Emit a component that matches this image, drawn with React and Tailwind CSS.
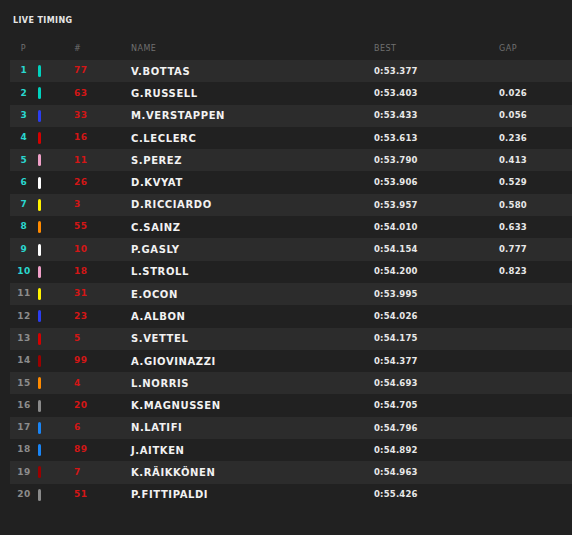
import React from 'react';

const rows = [
  [1, '#00d2be', 77, 'V.BOTTAS', '0:53.377', ''],
  [2, '#00d2be', 63, 'G.RUSSELL', '0:53.403', '0.026'],
  [3, '#2b3df0', 33, 'M.VERSTAPPEN', '0:53.433', '0.056'],
  [4, '#d40000', 16, 'C.LECLERC', '0:53.613', '0.236'],
  [5, '#f0a0c8', 11, 'S.PEREZ', '0:53.790', '0.413'],
  [6, '#ffffff', 26, 'D.KVYAT', '0:53.906', '0.529'],
  [7, '#fff200', 3, 'D.RICCIARDO', '0:53.957', '0.580'],
  [8, '#ff8a00', 55, 'C.SAINZ', '0:54.010', '0.633'],
  [9, '#ffffff', 10, 'P.GASLY', '0:54.154', '0.777'],
  [10, '#f0a0c8', 18, 'L.STROLL', '0:54.200', '0.823'],
  [11, '#fff200', 31, 'E.OCON', '0:53.995', ''],
  [12, '#2b3df0', 23, 'A.ALBON', '0:54.026', ''],
  [13, '#d40000', 5, 'S.VETTEL', '0:54.175', ''],
  [14, '#9b0000', 99, 'A.GIOVINAZZI', '0:54.377', ''],
  [15, '#ff8a00', 4, 'L.NORRIS', '0:54.693', ''],
  [16, '#8a8a8a', 20, 'K.MAGNUSSEN', '0:54.705', ''],
  [17, '#1a85f5', 6, 'N.LATIFI', '0:54.796', ''],
  [18, '#1a85f5', 89, 'J.AITKEN', '0:54.892', ''],
  [19, '#9b0000', 7, 'K.RÄIKKÖNEN', '0:54.963', ''],
  [20, '#8a8a8a', 51, 'P.FITTIPALDI', '0:55.426', ''],
];

export default function App() {
  return (
    <div className="w-[572px] h-[535px] bg-[#212121] overflow-hidden font-['DejaVu_Sans',sans-serif]">
      <div className="pt-[15px] pl-[13px] h-[40px] text-[8px] font-bold tracking-[0.4px] text-[#e6e6e6]">LIVE TIMING</div>
      <div className="flex items-center h-[17px] pl-[10px] text-[8px] text-[#707070] tracking-[0.5px]">
        <div className="w-[27px] text-center">P</div>
        <div className="w-[37px]"></div>
        <div className="w-[57px]">#</div>
        <div className="w-[243px]">NAME</div>
        <div className="w-[125px]">BEST</div>
        <div>GAP</div>
      </div>
      <div className="mt-[3px]">
        {rows.map(([p, col, num, name, best, gap], i) => (
          <div key={p} className={`flex items-center h-[22.3px] ml-[10px] font-bold ${i % 2 === 0 ? 'bg-[#2c2c2c]' : ''}`}>
            <div className={`w-[28px] text-center text-[9px] tracking-[0.5px] ${p <= 10 ? 'text-[#2ad7d0]' : 'text-[#8c8c8c]'}`}>{p}</div>
            <div className="w-[36px] flex">
              <div className="w-[2.5px] h-[12px] rounded-full" style={{ backgroundColor: col }}></div>
            </div>
            <div className="w-[57px] text-[9px] text-[#d41616] tracking-[0.4px]">{num}</div>
            <div className="w-[243px] text-[10px] text-[#f2f2f2] tracking-[0.6px]">{name}</div>
            <div className="w-[125px] text-[8.5px] text-[#e8e8e8] tracking-[0.2px]">{best}</div>
            <div className="text-[8.5px] text-[#e8e8e8] tracking-[0.2px]">{gap}</div>
          </div>
        ))}
      </div>
    </div>
  );
}
